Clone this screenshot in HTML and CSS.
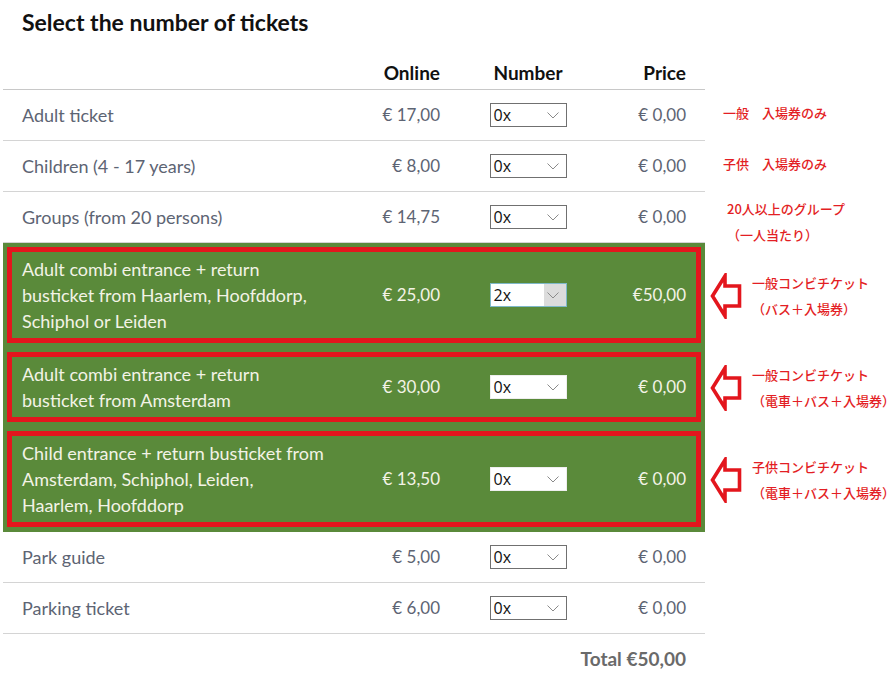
FILE: index.html
```html
<!DOCTYPE html>
<html lang="en">
<head>
<meta charset="utf-8">
<title>Tickets</title>
<link rel="stylesheet" href="styles.css">
</head>
<body>
<main class="page">
  <h1 class="title">Select the number of tickets</h1>

  <div class="sheet">
    <div class="line">
      <div class="row head">
        <div class="name"></div>
        <div class="online">Online</div>
        <div class="number">Number</div>
        <div class="price">Price</div>
      </div>
    </div>

    <div class="line">
      <div class="row">
        <div class="name">Adult ticket</div>
        <div class="online">€ 17,00</div>
        <div class="number"><span class="qty"><span class="qty-val">0x</span><span class="qty-btn"><svg width="12" height="7" viewBox="0 0 12 7"><path d="M0.5 0.5 L6 6 L11.5 0.5" fill="none" stroke="#8a8a8a" stroke-width="1"/></svg></span></span></div>
        <div class="price">€ 0,00</div>
      </div>
      <div class="note">一般　入場券のみ</div>
    </div>

    <div class="line">
      <div class="row">
        <div class="name">Children (4 - 17 years)</div>
        <div class="online">€ 8,00</div>
        <div class="number"><span class="qty"><span class="qty-val">0x</span><span class="qty-btn"><svg width="12" height="7" viewBox="0 0 12 7"><path d="M0.5 0.5 L6 6 L11.5 0.5" fill="none" stroke="#8a8a8a" stroke-width="1"/></svg></span></span></div>
        <div class="price">€ 0,00</div>
      </div>
      <div class="note">子供　入場券のみ</div>
    </div>

    <div class="line">
      <div class="row">
        <div class="name">Groups (from 20 persons)</div>
        <div class="online">€ 14,75</div>
        <div class="number"><span class="qty"><span class="qty-val">0x</span><span class="qty-btn"><svg width="12" height="7" viewBox="0 0 12 7"><path d="M0.5 0.5 L6 6 L11.5 0.5" fill="none" stroke="#8a8a8a" stroke-width="1"/></svg></span></span></div>
        <div class="price">€ 0,00</div>
      </div>
      <div class="note note-group">20人以上のグループ<br>（一人当たり）</div>
    </div>

    <div class="line">
      <div class="row combi">
        <div class="name">Adult combi entrance + return<br>busticket from Haarlem, Hoofddorp,<br>Schiphol or Leiden</div>
        <div class="online">€ 25,00</div>
        <div class="number"><span class="qty focus"><span class="qty-val">2x</span><span class="qty-btn"><svg width="12" height="7" viewBox="0 0 12 7"><path d="M0.5 0.5 L6 6 L11.5 0.5" fill="none" stroke="#8a8a8a" stroke-width="1"/></svg></span></span></div>
        <div class="price">€50,00</div>
      </div>
      <div class="note callout">
        <svg class="arrow" width="32" height="46" viewBox="0 0 32 46"><path d="M2.5 23 L15 3 L15 13 L29.5 13 L29.5 33 L15 33 L15 43 Z" fill="#fff" stroke="#e3161d" stroke-width="3.6" stroke-linejoin="miter"/></svg>
        <span>一般コンビチケット<br>（バス＋入場券）</span>
      </div>
    </div>

    <div class="line">
      <div class="row combi">
        <div class="name">Adult combi entrance + return<br>busticket from Amsterdam</div>
        <div class="online">€ 30,00</div>
        <div class="number"><span class="qty"><span class="qty-val">0x</span><span class="qty-btn"><svg width="12" height="7" viewBox="0 0 12 7"><path d="M0.5 0.5 L6 6 L11.5 0.5" fill="none" stroke="#8a8a8a" stroke-width="1"/></svg></span></span></div>
        <div class="price">€ 0,00</div>
      </div>
      <div class="note callout">
        <svg class="arrow" width="32" height="46" viewBox="0 0 32 46"><path d="M2.5 23 L15 3 L15 13 L29.5 13 L29.5 33 L15 33 L15 43 Z" fill="#fff" stroke="#e3161d" stroke-width="3.6" stroke-linejoin="miter"/></svg>
        <span>一般コンビチケット<br>（電車＋バス＋入場券）</span>
      </div>
    </div>

    <div class="line">
      <div class="row combi">
        <div class="name">Child entrance + return busticket from<br>Amsterdam, Schiphol, Leiden,<br>Haarlem, Hoofddorp</div>
        <div class="online">€ 13,50</div>
        <div class="number"><span class="qty"><span class="qty-val">0x</span><span class="qty-btn"><svg width="12" height="7" viewBox="0 0 12 7"><path d="M0.5 0.5 L6 6 L11.5 0.5" fill="none" stroke="#8a8a8a" stroke-width="1"/></svg></span></span></div>
        <div class="price">€ 0,00</div>
      </div>
      <div class="note callout">
        <svg class="arrow" width="32" height="46" viewBox="0 0 32 46"><path d="M2.5 23 L15 3 L15 13 L29.5 13 L29.5 33 L15 33 L15 43 Z" fill="#fff" stroke="#e3161d" stroke-width="3.6" stroke-linejoin="miter"/></svg>
        <span>子供コンビチケット<br>（電車＋バス＋入場券）</span>
      </div>
    </div>

    <div class="line">
      <div class="row">
        <div class="name">Park guide</div>
        <div class="online">€ 5,00</div>
        <div class="number"><span class="qty"><span class="qty-val">0x</span><span class="qty-btn"><svg width="12" height="7" viewBox="0 0 12 7"><path d="M0.5 0.5 L6 6 L11.5 0.5" fill="none" stroke="#8a8a8a" stroke-width="1"/></svg></span></span></div>
        <div class="price">€ 0,00</div>
      </div>
    </div>

    <div class="line">
      <div class="row">
        <div class="name">Parking ticket</div>
        <div class="online">€ 6,00</div>
        <div class="number"><span class="qty"><span class="qty-val">0x</span><span class="qty-btn"><svg width="12" height="7" viewBox="0 0 12 7"><path d="M0.5 0.5 L6 6 L11.5 0.5" fill="none" stroke="#8a8a8a" stroke-width="1"/></svg></span></span></div>
        <div class="price">€ 0,00</div>
      </div>
    </div>

    <div class="line">
      <div class="total">Total €50,00</div>
    </div>
  </div>
</main>
</body>
</html>
```

FILE: styles.css
```css
* {
  box-sizing: border-box;
}

body {
  margin: 0;
  background: #ffffff;
  font-family: "Lato", "Liberation Sans", sans-serif;
  color: #5d6473;
}

.page {
  padding: 0 0 0 3px;
}

.title {
  margin: 0;
  padding: 8px 0 0 19px;
  height: 36px;
  font-size: 23px;
  line-height: 28px;
  font-weight: 700;
  color: #111111;
}

/* one table row plus the remark beside it */
.line {
  display: flex;
  align-items: center;
}

.row {
  flex: none;
  width: 702px;
  display: grid;
  grid-template-columns: 318px 100px 176px 70px;
  align-items: center;
  padding: 12px 19px;
  border-bottom: 1px solid #d4d4d4;
  font-size: 17px;
  line-height: 26px;
}

.row .name {
  font-size: 18px;
}

.row.head {
  padding: 24px 19px 3px;
  border-bottom-color: #c8c8c8;
  color: #111111;
  font-size: 19px;
  font-weight: 700;
}

.online,
.price {
  text-align: right;
}

.number {
  display: flex;
  justify-content: center;
}

/* highlighted combi tickets */
.row.combi {
  padding: 13px 19px;
  background: #5a8a3a;
  color: #f3f3e6;
  border-bottom: 1px solid #5a8a3a;
  box-shadow: inset 0 0 0 4px #5a8a3a, inset 0 0 0 9px #e3161d;
}

/* quantity dropdown */
.qty {
  display: flex;
  align-items: stretch;
  width: 77px;
  height: 24px;
  background: #ffffff;
  border: 1px solid #707070;
  color: #111111;
  font-family: "Open Sans", "Liberation Sans", sans-serif;
  font-size: 16px;
  line-height: 22px;
}

.combi .qty {
  border-color: #eeeeee;
}

.qty-val {
  flex: 1;
  padding-left: 3px;
}

.qty-btn {
  width: 22px;
  display: flex;
  align-items: center;
  justify-content: center;
  padding-right: 3px;
}

.qty.focus {
  border-color: #7fb9c9;
}

.qty.focus .qty-btn {
  background: #dcdcdc;
}

.total {
  width: 702px;
  padding: 12px 19px;
  text-align: right;
  font-size: 19px;
  line-height: 26px;
  font-weight: 700;
  color: #6a6a6a;
}

/* red remarks to the right of the table */
.note {
  margin-left: 18px;
  color: #e31e24;
  font-family: "Noto Sans CJK JP", sans-serif;
  font-size: 13px;
  font-weight: 500;
  line-height: 26px;
  margin-top: -6px;
}

.note-group {
  margin: 0 0 -8px 22px;
}

.callout {
  display: flex;
  align-items: center;
  gap: 10px;
  margin-left: 5px;
  margin-top: 0;
}

.arrow {
  flex: none;
}
```
